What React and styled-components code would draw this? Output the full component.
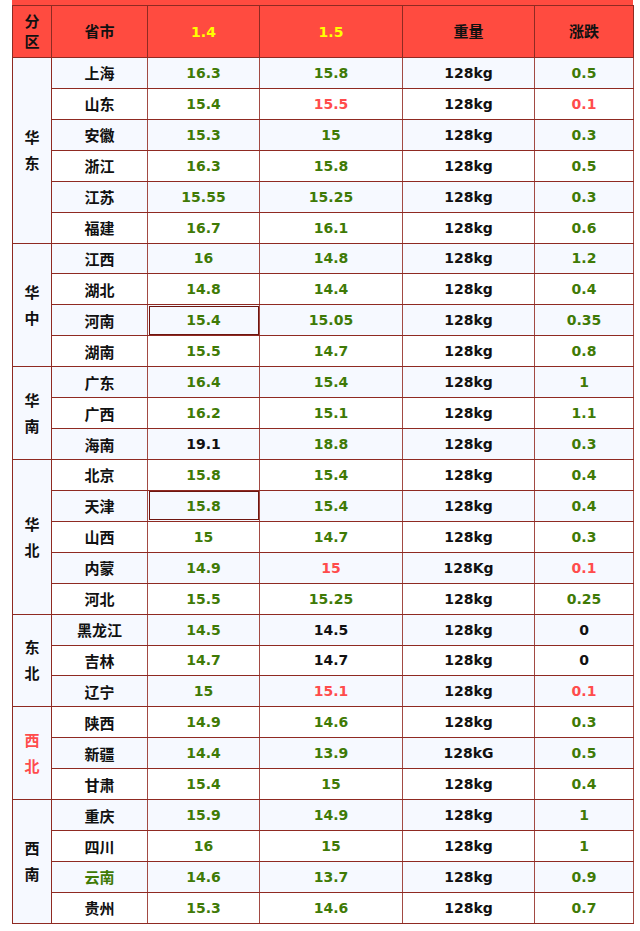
import React from "react";
import styled, { createGlobalStyle } from "styled-components";

const GlobalStyle = createGlobalStyle`
  body {
    margin: 0;
    background: #ffffff;
    font-family: "DejaVu Sans", "Noto Sans CJK SC", sans-serif;
  }
`;

const colors = {
  g: "#3f7a06",
  r: "#ff4c4c",
  k: "#111111",
};

const Page = styled.div`
  padding-left: 12px;
`;

const Frame = styled.div`
  width: 621px;
  background: #ff4b40;
  padding-top: 5px;
`;

const Table = styled.table`
  width: 621px;
  border-collapse: collapse;
  table-layout: fixed;
  font-weight: bold;
  font-size: 14px;
`;

const Head = styled.th`
  height: 51px;
  background: #ff4b40;
  border: 1px solid #8f2a22;
  color: ${p => (p.$yellow ? "#ffff00" : "#111")};
  font-family: "DejaVu Sans", "Noto Sans CJK SC", sans-serif;
  font-size: ${p => (p.$yellow ? "14px" : "15px")};
  font-weight: bold;
  padding: 0;
  line-height: 20px;
`;

const Row = styled.tr`
  height: 30.93px;
  background: ${p => (p.$odd ? "#f6f9ff" : "#ffffff")};
`;

const Cell = styled.td`
  text-align: center;
  padding: 0;
  border-top: 1px solid #8f2a22;
  border-bottom: 1px solid #8f2a22;
  border-left: 1px solid #a24a43;
  border-right: 1px solid #a24a43;
  color: ${p => colors[p.$c] || colors.k};
  outline: ${p => (p.$picked ? "1px solid #6e1610" : "none")};
  outline-offset: -2px;
`;

const Province = styled(Cell)`
  font-family: "Noto Sans CJK SC", sans-serif;
  font-size: 15px;
`;

const Region = styled.td`
  background: #f6f9ff;
  border: 1px solid #8f2a22;
  text-align: center;
  padding: 0;
  font-family: "Noto Sans CJK SC", sans-serif;
  font-size: 15px;
  color: ${p => (p.$red ? colors.r : colors.k)};
  line-height: 26px;
`;

const Stack = styled.span`
  display: block;
`;

// [province, 1.4, 1.5, weight, change] — colours: g green, r red, k black
const groups = [
  {
    name: "华东",
    rows: [
      ["上海", "16.3", "15.8", "128kg", "0.5"],
      ["山东", "15.4", ["15.5", "r"], "128kg", ["0.1", "r"]],
      ["安徽", "15.3", "15", "128kg", "0.3"],
      ["浙江", "16.3", "15.8", "128kg", "0.5"],
      ["江苏", "15.55", "15.25", "128kg", "0.3"],
      ["福建", "16.7", "16.1", "128kg", "0.6"],
    ],
  },
  {
    name: "华中",
    rows: [
      ["江西", "16", "14.8", "128kg", "1.2"],
      ["湖北", "14.8", "14.4", "128kg", "0.4"],
      ["河南", ["15.4", "g", true], "15.05", "128kg", "0.35"],
      ["湖南", "15.5", "14.7", "128kg", "0.8"],
    ],
  },
  {
    name: "华南",
    rows: [
      ["广东", "16.4", "15.4", "128kg", "1"],
      ["广西", "16.2", "15.1", "128kg", "1.1"],
      ["海南", ["19.1", "k"], "18.8", "128kg", "0.3"],
    ],
  },
  {
    name: "华北",
    rows: [
      ["北京", "15.8", "15.4", "128kg", "0.4"],
      ["天津", ["15.8", "g", true], "15.4", "128kg", "0.4"],
      ["山西", "15", "14.7", "128kg", "0.3"],
      ["内蒙", "14.9", ["15", "r"], "128Kg", ["0.1", "r"]],
      ["河北", "15.5", "15.25", "128kg", "0.25"],
    ],
  },
  {
    name: "东北",
    rows: [
      ["黑龙江", "14.5", ["14.5", "k"], "128kg", ["0", "k"]],
      ["吉林", "14.7", ["14.7", "k"], "128kg", ["0", "k"]],
      ["辽宁", "15", ["15.1", "r"], "128kg", ["0.1", "r"]],
    ],
  },
  {
    name: "西北",
    red: true,
    rows: [
      ["陕西", "14.9", "14.6", "128kg", "0.3"],
      ["新疆", "14.4", "13.9", "128kG", "0.5"],
      ["甘肃", "15.4", "15", "128kg", "0.4"],
    ],
  },
  {
    name: "西南",
    rows: [
      ["重庆", "15.9", "14.9", "128kg", "1"],
      ["四川", "16", "15", "128kg", "1"],
      [["云南", "g"], "14.6", "13.7", "128kg", "0.9"],
      ["贵州", "15.3", "14.6", "128kg", "0.7"],
    ],
  },
];

const val = (v, fallback) => (Array.isArray(v) ? v : [v, fallback, false]);

export default function App() {
  let index = 0;
  return (
    <Page>
      <GlobalStyle />
      <Frame>
        <Table>
          <colgroup>
            <col style={{ width: 39 }} />
            <col style={{ width: 96 }} />
            <col style={{ width: 112 }} />
            <col style={{ width: 143 }} />
            <col style={{ width: 132 }} />
            <col style={{ width: 99 }} />
          </colgroup>
          <thead>
            <tr>
              <Head>
                <Stack>分</Stack>
                <Stack>区</Stack>
              </Head>
              <Head>省市</Head>
              <Head $yellow>1.4</Head>
              <Head $yellow>1.5</Head>
              <Head>重量</Head>
              <Head>涨跌</Head>
            </tr>
          </thead>
          <tbody>
            {groups.map(group =>
              group.rows.map((row, i) => {
                index += 1;
                const [prov, a, b, w, d] = row;
                const [pName, pColor] = val(prov, "k");
                const [aText, aColor, aPicked] = val(a, "g");
                const [bText, bColor] = val(b, "g");
                const [dText, dColor] = val(d, "g");
                return (
                  <Row key={pName} $odd={index % 2 === 1}>
                    {i === 0 && (
                      <Region rowSpan={group.rows.length} $red={group.red}>
                        <Stack>{group.name[0]}</Stack>
                        <Stack>{group.name[1]}</Stack>
                      </Region>
                    )}
                    <Province $c={pColor}>{pName}</Province>
                    <Cell $c={aColor} $picked={aPicked}>
                      {aText}
                    </Cell>
                    <Cell $c={bColor}>{bText}</Cell>
                    <Cell $c="k">{w}</Cell>
                    <Cell $c={dColor}>{dText}</Cell>
                  </Row>
                );
              })
            )}
          </tbody>
        </Table>
      </Frame>
    </Page>
  );
}
